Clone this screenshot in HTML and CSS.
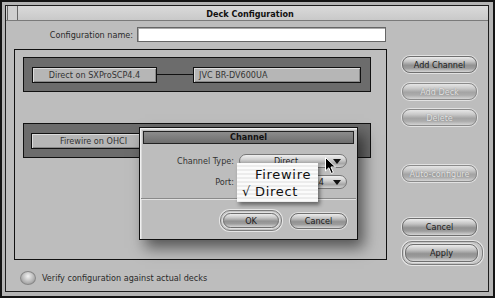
FILE: index.html
```html
<!DOCTYPE html>
<html lang="en">
<head>
    <meta charset="UTF-8">
    <title>Deck Configuration</title>
    <link rel="stylesheet" href="styles.css">
</head>
<body>

    <div class="window">
        <div class="frame">
            <div class="titlebar">
                <span class="close-box"></span>
                <span class="title">Deck Configuration</span>
            </div>

            <div class="content">
                <div class="main-col">
                    <div class="config-row">
                        <label for="configName">Configuration name:</label>
                        <input type="text" id="configName" class="text-field">
                    </div>

                    <div class="deck-panel">
                        <div class="channel-band">
                            <div class="deck-box channel-box">Direct on SXProSCP4.4</div>
                            <span class="connector"></span>
                            <div class="deck-box device-box">JVC BR-DV600UA</div>
                        </div>

                        <div class="channel-band second">
                            <div class="deck-box channel-box">Firewire on OHCI</div>
                        </div>

                        <!-- modal sheet on top of the channel list -->
                        <div class="dialog">
                            <div class="dialog-title">Channel</div>
                            <div class="dialog-form">
                                <span class="dialog-label">Channel Type:</span>
                                <div class="popup">Direct<span class="popup-arrow"></span></div>
                                <span class="dialog-label">Port:</span>
                                <div class="popup port">SXProSCP4.4<span class="popup-arrow"></span></div>
                            </div>
                            <div class="separator"></div>
                            <div class="dialog-buttons">
                                <div class="default-ring">
                                    <button class="btn small">OK</button>
                                </div>
                                <button class="btn small cancel">Cancel</button>
                            </div>

                            <div class="popup-menu">
                                <div class="menu-item">Firewire</div>
                                <div class="menu-item checked"><span class="check">√</span>Direct</div>
                            </div>

                            <svg class="cursor" width="12" height="18" viewBox="0 0 12 18">
                                <path d="M0.5 0.5 L0.5 14 L3.8 10.8 L6.2 16.5 L8.4 15.5 L6 10 L10.5 10 Z" fill="#000" stroke="#fff" stroke-width="1"/>
                            </svg>
                        </div>
                    </div>

                    <div class="verify-row">
                        <span class="radio"></span>
                        <span>Verify configuration against actual decks</span>
                    </div>
                </div>

                <div class="button-col">
                    <button class="btn">Add Channel</button>
                    <button class="btn disabled add-deck">Add Deck</button>
                    <button class="btn disabled delete">Delete</button>
                    <button class="btn disabled auto">Auto-configure</button>
                    <button class="btn cancel-main">Cancel</button>
                    <div class="default-ring apply-ring">
                        <button class="btn">Apply</button>
                    </div>
                </div>
            </div>
        </div>
    </div>

</body>
</html>
```

FILE: styles.css
```css
body {
    margin: 0;
    padding: 0;
    background: #000;
    font-family: 'DejaVu Sans Condensed', 'DejaVu Sans', sans-serif;
    font-size: 9px;
    color: #2a2a2a;
}

.window {
    width: 495px;
    height: 298px;
    box-sizing: border-box;
    border: 2px solid #141414;
    background: #b4b4b4;
    padding: 3px 4px 4px 3px;
}

.frame {
    height: 100%;
    box-sizing: border-box;
    border: 1px solid #1e1e1e;
    background: #bdbdbd;
    display: flex;
    flex-direction: column;
}

.titlebar {
    height: 14px;
    border-bottom: 1px solid #7a7a7a;
    background: linear-gradient(#dadada, #c9c9c9);
    display: flex;
    align-items: center;
}

.close-box {
    width: 9px;
    height: 14px;
    margin-left: 1px;
    border-left: 1px solid #666;
    border-right: 1px solid #666;
    background: #cfcfcf;
}

.title {
    flex: 1;
    text-align: center;
    font-weight: bold;
    color: #111;
    padding: 1px 6px 0 0;
}

.content {
    flex: 1;
    display: flex;
    padding: 6px 0 0 8px;
}

.main-col {
    width: 373px;
}

.config-row {
    height: 15px;
    display: flex;
    justify-content: flex-end;
    align-items: center;
    gap: 4px;
    padding-right: 1px;
}

.text-field {
    width: 249px;
    height: 15px;
    box-sizing: border-box;
    border: 1px solid #666;
    box-shadow: inset 1px 1px 0 #aaa;
    background: #fff;
    padding: 0;
    margin: 0;
}

.deck-panel {
    position: relative;
    margin-top: 7px;
    height: 211px;
    box-sizing: border-box;
    border: 1px solid #111;
    padding: 7px 15px 0 8px;
}

.channel-band {
    height: 35px;
    box-sizing: border-box;
    border: 1px solid #111;
    background: #6c6c6c;
    display: flex;
    align-items: center;
    padding-left: 8px;
}

.channel-band.second {
    margin-top: 31px;
    padding-left: 7px;
}

.deck-box {
    height: 16px;
    box-sizing: border-box;
    border: 1px solid #111;
    box-shadow: inset 1px 1px 0 #dcdcdc, inset -1px -1px 0 #888;
    background: #b6b6b6;
    display: flex;
    align-items: center;
    justify-content: center;
    color: #333;
}

.channel-box {
    width: 125px;
}

.device-box {
    width: 168px;
    justify-content: flex-start;
    padding-left: 5px;
}

.connector {
    width: 36px;
    height: 1px;
    background: #111;
}

.verify-row {
    display: flex;
    align-items: center;
    gap: 6px;
    margin-top: 11px;
    padding-left: 6px;
}

.radio {
    width: 14px;
    height: 12px;
    border-radius: 50%;
    border: 1px solid #888;
    background: radial-gradient(circle at 50% 35%, #f2f2f2, #a8a8a8 70%, #8c8c8c);
}

/* buttons */

.button-col {
    display: flex;
    flex-direction: column;
    padding: 29px 0 0 15px;
}

.btn {
    width: 75px;
    height: 17px;
    box-sizing: border-box;
    border: 1px solid #6f6f6f;
    border-radius: 8px;
    box-shadow: 0 0 0 1px #e2e2e2;
    background: linear-gradient(#ececec 0%, #c4c4c4 30%, #929292 55%, #9c9c9c 75%, #d6d6d6 100%);
    font-family: inherit;
    font-size: 9px;
    color: #1c1c1c;
    padding: 0;
    margin: 0;
}

.btn.disabled {
    color: #e4e4e4;
    text-shadow: 0 0 1px #7a7a7a;
    background: linear-gradient(#e6e6e6 0%, #c8c8c8 30%, #a4a4a4 55%, #acacac 75%, #d4d4d4 100%);
    border-color: #8a8a8a;
}

.add-deck {
    margin-top: 10px;
}

.delete {
    margin-top: 9px;
}

.auto {
    margin-top: 39px;
}

.cancel-main {
    margin-top: 36px;
    height: 18px;
}

.default-ring {
    border: 1px solid #7c7c7c;
    border-radius: 10px;
    box-shadow: 0 0 0 1px #e6e6e6;
    padding: 2px;
    background: #c6c6c6;
}

.apply-ring {
    margin-top: 5px;
    width: 75px;
}

.apply-ring .btn {
    width: 73px;
    height: 18px;
}

/* channel dialog */

.dialog {
    position: absolute;
    left: 124px;
    top: 77px;
    width: 219px;
    height: 113px;
    box-sizing: border-box;
    border: 1px solid #111;
    background: #bdbdbd;
    box-shadow: inset 1px 1px 0 #f0f0f0, inset 2px 2px 0 #d8d8d8, 6px 8px 14px rgba(0, 0, 0, 0.55);
    padding: 3px;
}

.dialog-title {
    height: 11px;
    border: 1px solid #222;
    background: linear-gradient(#8c8c8c, #6e6e6e);
    text-align: center;
    font-weight: bold;
    color: #111;
    line-height: 11px;
}

.dialog-form {
    display: grid;
    grid-template-columns: 91px 108px;
    column-gap: 5px;
    row-gap: 7px;
    align-items: center;
    margin-top: 10px;
}

.dialog-label {
    text-align: right;
    color: #333;
}

.popup {
    position: relative;
    height: 14px;
    box-sizing: border-box;
    border: 1px solid #777;
    border-radius: 7px;
    background: linear-gradient(#f0f0f0 0%, #cfcfcf 40%, #a6a6a6 70%, #d0d0d0 100%);
    text-align: center;
    line-height: 13px;
    padding-right: 14px;
    color: #222;
}

.popup.port {
    text-align: right;
    padding-right: 22px;
}

.popup-arrow {
    position: absolute;
    right: 5px;
    top: 4px;
    border-left: 4px solid transparent;
    border-right: 4px solid transparent;
    border-top: 5px solid #111;
}

.separator {
    height: 1px;
    background: #8a8a8a;
    border-bottom: 1px solid #e2e2e2;
    margin: 9px -2px 0 -2px;
}

.dialog-buttons {
    display: flex;
    justify-content: flex-end;
    align-items: center;
    gap: 8px;
    margin-top: 10px;
    padding-right: 7px;
}

.btn.small {
    width: 56px;
    height: 15px;
}

.btn.small.cancel {
    width: 57px;
    height: 16px;
}

.popup-menu {
    position: absolute;
    left: 97px;
    top: 35px;
    width: 81px;
    height: 39px;
    box-sizing: border-box;
    background: repeating-linear-gradient(#fbfbfb 0, #fbfbfb 2px, #ececec 2px, #ececec 4px);
    box-shadow: 2px 3px 4px rgba(0, 0, 0, 0.45);
    padding-top: 3px;
    font-family: 'DejaVu Sans', sans-serif;
    font-size: 13px;
    color: #111;
}

.menu-item {
    height: 17px;
    line-height: 17px;
    padding-left: 18px;
    letter-spacing: 0.7px;
}

.menu-item.checked {
    padding-left: 5px;
}

.check {
    display: inline-block;
    width: 13px;
}

.cursor {
    position: absolute;
    left: 185px;
    top: 29px;
}
```
